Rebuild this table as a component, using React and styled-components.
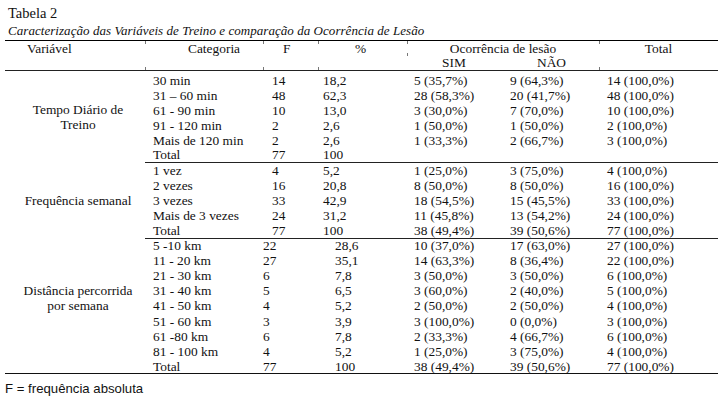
import React from 'react';
import styled, { createGlobalStyle } from 'styled-components';

const GlobalStyle = createGlobalStyle`
	html, body {
		margin: 0;
		padding: 0;
		background: #fff;
	}
	body {
		font-family: "Liberation Serif", "Times New Roman", serif;
		color: #111;
	}
`;

const Page = styled.div`
	width: 728px;
	height: 405px;
	padding: 5px 0 0 5px;
	box-sizing: border-box;
	overflow: hidden;
`;

const Title = styled.div`
	font-family: "Liberation Serif", serif;
	font-size: 14.5px;
	line-height: 16px;
	height: 18px;
	padding-left: 3px;
`;

const Caption = styled.div`
	font-family: "Liberation Serif", serif;
	font-size: 13px;
	font-style: italic;
	line-height: 16px;
	height: 17px;
	padding-left: 3px;
	letter-spacing: 0.05px;
`;

const Table = styled.table`
	width: 713px;
	table-layout: fixed;
	border-collapse: collapse;
	font-size: 13.4px;
	border-top: 1.5px solid #000;
	border-bottom: 1.5px solid #111;
`;

const HeadRow = styled.tr`
	height: ${({ $h }) => $h}px;
`;

// small grid ticks left by the word processor at column boundaries
const tick = `
	background-image: linear-gradient(#777, #777), linear-gradient(#777, #777);
	background-size: 1px 3px, 1px 3px;
	background-position: left top, left bottom;
	background-repeat: no-repeat;
`;

const Th = styled.th`
	font-weight: normal;
	padding: ${({ $top }) => $top || 0}px 0 0 ${({ $pad }) => $pad || 0}px;
	text-align: ${({ $center }) => ($center ? 'center' : 'left')};
	vertical-align: top;
	line-height: 14px;
	white-space: nowrap;
	border-bottom: ${({ $line }) => ($line ? '1px solid #222' : 'none')};
	${({ $tick }) => ($tick ? tick : '')}
`;

const Row = styled.tr`
	height: ${({ $h }) => $h}px;
`;

const Td = styled.td`
	padding: ${({ $top }) => $top || 0}px 0 0 ${({ $pad }) => $pad || 0}px;
	line-height: 13px;
	vertical-align: middle;
	white-space: nowrap;
	border-bottom: ${({ $line }) => ($line ? '1px solid #222' : 'none')};
`;

const GroupCell = styled.td`
	padding: 0 0 0 6px;
	text-align: center;
	vertical-align: middle;
	line-height: 15px;
`;

const Footnote = styled.div`
	font-family: "Liberation Sans", Arial, sans-serif;
	font-size: 13.2px;
	line-height: 14px;
	padding-top: 8px;
`;

const groups = [
	{
		name: ['Tempo Diário de', 'Treino'],
		span: 6,
		pitch: 15,
		top: 2,
		fPad: 9,
		pPad: 5,
		rows: [
			['30 min', '14', '18,2', '5 (35,7%)', '9 (64,3%)', '14 (100,0%)'],
			['31 – 60 min', '48', '62,3', '28 (58,3%)', '20 (41,7%)', '48 (100,0%)'],
			['61 - 90 min', '10', '13,0', '3 (30,0%)', '7 (70,0%)', '10 (100,0%)'],
			['91 - 120 min', '2', '2,6', '1 (50,0%)', '1 (50,0%)', '2 (100,0%)'],
			['Mais de 120 min', '2', '2,6', '1 (33,3%)', '2 (66,7%)', '3 (100,0%)'],
			['Total', '77', '100', '', '', ''],
		],
	},
	{
		name: ['Frequência semanal'],
		span: 5,
		pitch: 15,
		top: 0.5,
		fPad: 9,
		pPad: 5,
		rows: [
			['1 vez', '4', '5,2', '1 (25,0%)', '3 (75,0%)', '4 (100,0%)'],
			['2 vezes', '16', '20,8', '8 (50,0%)', '8 (50,0%)', '16 (100,0%)'],
			['3 vezes', '33', '42,9', '18 (54,5%)', '15 (45,5%)', '33 (100,0%)'],
			['Mais de 3 vezes', '24', '31,2', '11 (45,8%)', '13 (54,2%)', '24 (100,0%)'],
			['Total', '77', '100', '38 (49,4%)', '39 (50,6%)', '77 (100,0%)'],
		],
	},
	{
		name: ['Distância percorrida', 'por semana'],
		span: 8,
		pitch: 15.1,
		top: 0,
		fPad: 0,
		pPad: 17,
		rows: [
			['5 -10 km', '22', '28,6', '10 (37,0%)', '17 (63,0%)', '27 (100,0%)'],
			['11 - 20 km', '27', '35,1', '14 (63,3%)', '8 (36,4%)', '22 (100,0%)'],
			['21 - 30 km', '6', '7,8', '3 (50,0%)', '3 (50,0%)', '6 (100,0%)'],
			['31 - 40 km', '5', '6,5', '3 (60,0%)', '2 (40,0%)', '5 (100,0%)'],
			['41 - 50 km', '4', '5,2', '2 (50,0%)', '2 (50,0%)', '4 (100,0%)'],
			['51 - 60 km', '3', '3,9', '3 (100,0%)', '0 (0,0%)', '3 (100,0%)'],
			['61 -80 km', '6', '7,8', '2 (33,3%)', '4 (66,7%)', '6 (100,0%)'],
			['81 - 100 km', '4', '5,2', '1 (25,0%)', '3 (75,0%)', '4 (100,0%)'],
			['Total', '77', '100', '38 (49,4%)', '39 (50,6%)', '77 (100,0%)'],
		],
	},
];

const widths = [140, 118, 55, 89, 95, 97, 119];

function Group({ group, last }) {
	return group.rows.map((r, i) => {
		const first = i === 0;
		const end = i === group.rows.length - 1;
		const line = end && !last;
		const top = first ? group.top : 0;
		return (
			<Row key={i} $h={group.pitch + top}>
				{first && (
					<GroupCell rowSpan={group.span}>
						{group.name.map((n) => (
							<div key={n}>{n}</div>
						))}
					</GroupCell>
				)}
				{i >= group.span && <Td />}
				<Td $pad={8} $top={top} $line={line}>{r[0]}</Td>
				<Td $pad={group.fPad} $top={top} $line={line}>{r[1]}</Td>
				<Td $pad={group.pPad} $top={top} $line={line}>{r[2]}</Td>
				<Td $pad={7} $top={top} $line={line}>{r[3]}</Td>
				<Td $pad={8} $top={top} $line={line}>{r[4]}</Td>
				<Td $pad={8} $top={top} $line={line}>{r[5]}</Td>
			</Row>
		);
	});
}

export default function App() {
	return (
		<Page>
			<GlobalStyle />
			<Title>Tabela 2</Title>
			<Caption>Caracterização das Variáveis de Treino e comparação da Ocorrência de Lesão</Caption>
			<Table>
				<colgroup>
					{widths.map((w, i) => (
						<col key={i} style={{ width: w }} />
					))}
				</colgroup>
				<thead>
					<HeadRow $h={15}>
						<Th rowSpan={2} $pad={22} $top={1} $line>Variável</Th>
						<Th rowSpan={2} $pad={43} $top={1} $line $tick>Categoria</Th>
						<Th rowSpan={2} $pad={20} $top={1} $line $tick>F</Th>
						<Th rowSpan={2} $pad={37} $top={1} $line $tick>%</Th>
						<Th colSpan={2} $center $top={1} $tick>Ocorrência de lesão</Th>
						<Th rowSpan={2} $center $top={1} $line $tick>Total</Th>
					</HeadRow>
					<HeadRow $h={13}>
						<Th $pad={35} $line>SIM</Th>
						<Th $pad={35} $line>NÃO</Th>
					</HeadRow>
				</thead>
				<tbody>
					{groups.map((g, i) => (
						<Group key={i} group={g} last={i === groups.length - 1} />
					))}
				</tbody>
			</Table>
			<Footnote>F = frequência absoluta</Footnote>
		</Page>
	);
}
